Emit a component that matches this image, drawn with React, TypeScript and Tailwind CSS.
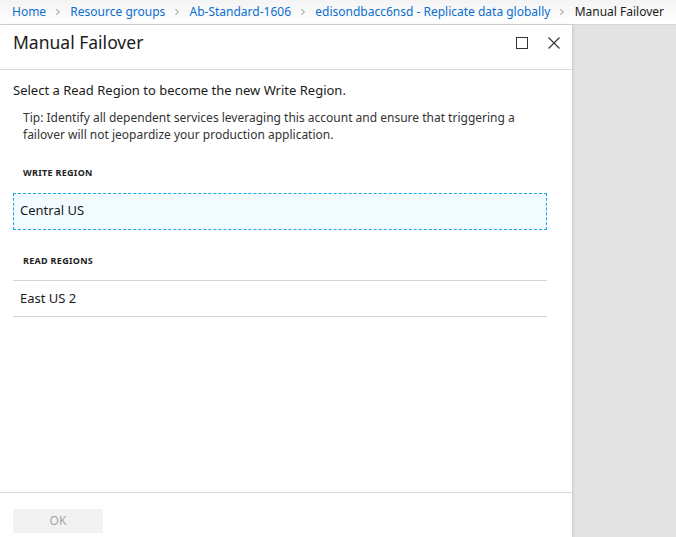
const font = { fontFamily: '"Segoe UI", "Noto Sans", "Open Sans", sans-serif' };

function Crumb({ label, last }: { label: string; last?: boolean }) {
  if (last) return <span className="text-[#1b1b1b]">{label}</span>;
  return (
    <>
      <a className="text-[#0a6fcf]">{label}</a>
      <svg className="mx-[10px]" width="5" height="8" viewBox="0 0 5 8">
        <path d="M0.5 0.5 L4 4 L0.5 7.5" fill="none" stroke="#777" strokeWidth="1" />
      </svg>
    </>
  );
}

export default function App() {
  return (
    <div
      className="w-[676px] h-[537px] overflow-hidden bg-[#e3e3e3] flex flex-col text-[#1b1b1b]"
      style={font}
    >
      <div className="h-[25px] shrink-0 bg-gradient-to-b from-[#f4f4f4] to-white border-b border-[#d6d6d6] flex items-center px-[12px] text-[12px] whitespace-nowrap">
        <Crumb label="Home" />
        <Crumb label="Resource groups" />
        <Crumb label="Ab-Standard-1606" />
        <Crumb label="edisondbacc6nsd - Replicate data globally" />
        <Crumb label="Manual Failover" last />
      </div>

      <div className="flex-1 flex min-h-0">
        <div className="w-[572px] bg-white flex flex-col shadow-[1px_0_3px_rgba(0,0,0,0.12)]">
          <div className="h-[45px] shrink-0 flex items-center justify-between pl-[13px] pr-[12px] pb-[9px] border-b border-[#d9d9d9]">
            <h1 className="text-[17.5px] text-[#1b1b1b]">Manual Failover</h1>
            <div className="flex items-center gap-[20px]">
              <svg width="12" height="12" viewBox="0 0 12 12">
                <rect x="0.5" y="0.5" width="11" height="11" fill="none" stroke="#333" strokeWidth="1" />
              </svg>
              <svg width="12" height="12" viewBox="0 0 12 12">
                <path d="M0.5 0.5 L11.5 11.5 M11.5 0.5 L0.5 11.5" stroke="#333" strokeWidth="1.1" />
              </svg>
            </div>
          </div>

          <div className="flex-1 px-[13px] pr-[25px] pt-[11px] text-[13px]">
            <p className="leading-[18px]">Select a Read Region to become the new Write Region.</p>
            <p className="mt-[10px] pl-[10px] text-[12px] leading-[17px] text-[#333]">
              Tip: Identify all dependent services leveraging this account and ensure that triggering a
              failover will not jeopardize your production application.
            </p>

            <div className="mt-[23px] pl-[10px] text-[9px] font-bold tracking-[0.3px] text-[#222]">WRITE REGION</div>
            <div className="mt-[13px] h-[37px] border border-dashed border-[#1aa5e6] bg-[#f2fbff] flex items-center pl-[6px] text-[13px]">
              Central US
            </div>

            <div className="mt-[24px] pl-[10px] text-[9px] font-bold tracking-[0.3px] text-[#222]">READ REGIONS</div>
            <div className="mt-[13px] border-t border-[#d4d4d4]" />
            <div className="h-[36px] border-b border-[#d4d4d4] flex items-center pl-[7px] text-[13px]">East US 2</div>
          </div>

          <div className="h-[45px] shrink-0 border-t border-[#d6d6d6] flex items-start pl-[13px] pt-[16px]">
            <button className="w-[90px] h-[24px] bg-[#f2f2f2] text-[#a6a6a6] text-[12px]">OK</button>
          </div>
        </div>
        <div className="flex-1" />
      </div>
    </div>
  );
}
